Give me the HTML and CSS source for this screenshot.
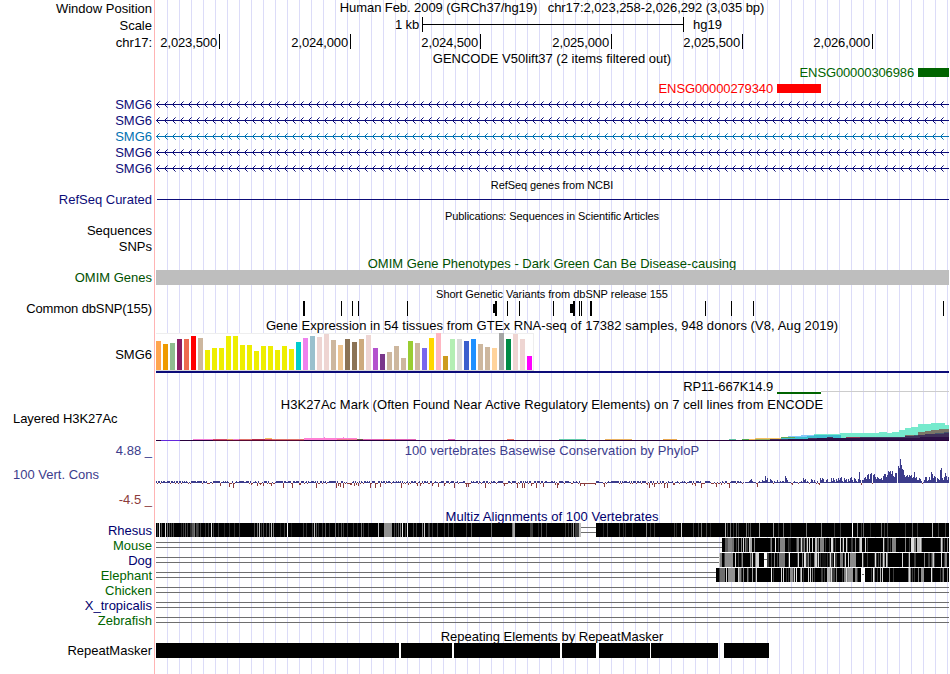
FILE: index.html
```html
<!DOCTYPE html>
<html lang="en">
<head>
  <meta charset="UTF-8">
  <title>chr17:2,023,258-2,026,292 - Genome Browser</title>
  <link rel="stylesheet" href="styles.css">
</head>
<body>
  <main class="browser">
    <!-- Position and ruler -->
    <div class="row ruler">
      <div class="label">Window Position</div>
      <div class="title position">Human Feb. 2009 (GRCh37/hg19) &nbsp; chr17:2,023,258-2,026,292 (3,035 bp)</div>
    </div>
    <div class="row ruler">
      <div class="label">Scale</div>
      <svg class="plot" viewBox="154 0 795 17">
        <path d="M422 0h1v15h-1zM683 0h1v15h-1zM422 7h262v1h-262z"/>
        <text class="end" x="419" y="12">1 kb</text>
        <text x="693" y="12">hg19</text>
      </svg>
    </div>
    <div class="row ruler">
      <div class="label">chr17:</div>
      <svg class="plot" id="ruler" viewBox="154 0 795 17"></svg>
    </div>

    <!-- GENCODE -->
    <div class="title gencode-title">GENCODE V50lift37 (2 items filtered out)</div>
    <div class="row gene">
      <div class="label"></div>
      <svg class="plot green" viewBox="154 0 795 16">
        <text class="end" x="914" y="13">ENSG00000306986</text>
        <rect x="918" y="4" width="31" height="9"/>
      </svg>
    </div>
    <div class="row gene">
      <div class="label"></div>
      <svg class="plot red" viewBox="154 0 795 16">
        <text class="end" x="773" y="13">ENSG00000279340</text>
        <rect x="777" y="4" width="44" height="9"/>
      </svg>
    </div>
    <div class="row gene navy"><div class="label">SMG6</div><svg class="plot intron" viewBox="154 0 795 16"></svg></div>
    <div class="row gene navy"><div class="label">SMG6</div><svg class="plot intron" viewBox="154 0 795 16"></svg></div>
    <div class="row gene azure"><div class="label">SMG6</div><svg class="plot intron" viewBox="154 0 795 16"></svg></div>
    <div class="row gene navy"><div class="label">SMG6</div><svg class="plot intron" viewBox="154 0 795 16"></svg></div>
    <div class="row gene navy"><div class="label">SMG6</div><svg class="plot intron" viewBox="154 0 795 16"></svg></div>

    <!-- RefSeq -->
    <div class="title small refseq-title">RefSeq genes from NCBI</div>
    <div class="row refseq navy">
      <div class="label">RefSeq Curated</div>
      <svg class="plot" viewBox="154 0 795 16"><rect x="157" y="7" width="792" height="1"/></svg>
    </div>

    <!-- Publications -->
    <div class="title small pubs-title">Publications: Sequences in Scientific Articles</div>
    <div class="row gene"><div class="label">Sequences</div></div>
    <div class="row gene"><div class="label">SNPs</div></div>

    <!-- OMIM -->
    <div class="title omim-title">OMIM Gene Phenotypes - Dark Green Can Be Disease-causing</div>
    <div class="row omim">
      <div class="label">OMIM Genes</div>
      <svg class="plot" viewBox="154 0 795 15"><rect x="156" width="793" height="15" fill="#bebebe"/></svg>
    </div>

    <!-- dbSNP -->
    <div class="title small snp-title">Short Genetic Variants from dbSNP release 155</div>
    <div class="row snp">
      <div class="label">Common dbSNP(155)</div>
      <svg class="plot" id="snps" viewBox="154 0 795 15"></svg>
    </div>

    <!-- GTEx -->
    <div class="title wide gtex-title">Gene Expression in 54 tissues from GTEx RNA-seq of 17382 samples, 948 donors (V8, Aug 2019)</div>
    <div class="row gtex">
      <div class="label">SMG6</div>
      <svg class="plot" id="gtex" viewBox="154 0 795 46"></svg>
    </div>
    <div class="row gene">
      <div class="label"></div>
      <svg class="plot" viewBox="154 0 795 16">
        <text class="end" x="773" y="12">RP11-667K14.9</text>
        <rect x="777" y="13" width="44" height="2" fill="#006400"/>
        <rect x="821" y="12" width="128" height="1" fill="#ccc"/>
      </svg>
    </div>

    <!-- H3K27Ac -->
    <div class="title wide h3k-title">H3K27Ac Mark (Often Found Near Active Regulatory Elements) on 7 cell lines from ENCODE</div>
    <div class="row h3k">
      <div class="label left">Layered H3K27Ac</div>
      <svg class="plot" id="h3k" viewBox="154 412 795 30"></svg>
    </div>

    <!-- Conservation -->
    <div class="row cons-head">
      <div class="label indigo">4.88 _</div>
      <div class="title wide indigo">100 vertebrates Basewise Conservation by PhyloP</div>
    </div>
    <div class="row cons">
      <div class="label-stack">
        <div class="indigo">100 Vert. Cons</div>
        <div class="min">-4.5 _</div>
      </div>
      <svg class="plot" id="phylop" viewBox="154 459 795 50"></svg>
    </div>

    <!-- Multiz -->
    <div class="title wide multiz-title">Multiz Alignments of 100 Vertebrates</div>
    <div class="row species primary"><div class="label">Rhesus</div><svg class="plot" id="rhesus" viewBox="154 0 795 15"></svg></div>
    <div class="row species"><div class="label">Mouse</div><svg class="plot" id="mouse" viewBox="154 0 795 15"></svg></div>
    <div class="row species primary"><div class="label">Dog</div><svg class="plot" id="dog" viewBox="154 0 795 15"></svg></div>
    <div class="row species"><div class="label">Elephant</div><svg class="plot" id="elephant" viewBox="154 0 795 15"></svg></div>
    <div class="row species"><div class="label">Chicken</div><svg class="plot" id="chicken" viewBox="154 0 795 15"></svg></div>
    <div class="row species primary"><div class="label">X_tropicalis</div><svg class="plot" id="frog" viewBox="154 0 795 15"></svg></div>
    <div class="row species"><div class="label">Zebrafish</div><svg class="plot" id="zebrafish" viewBox="154 0 795 15"></svg></div>

    <!-- RepeatMasker -->
    <div class="title repeat-title">Repeating Elements by RepeatMasker</div>
    <div class="row repeat">
      <div class="label">RepeatMasker</div>
      <svg class="plot" id="repeats" viewBox="154 0 795 15"></svg>
    </div>
  </main>
  <script src="script.js"></script>
</body>
</html>
```

FILE: styles.css
```css
body {
  margin: 0;
  background: #fff;
  color: #000;
  font-family: "Liberation Sans", Arial, sans-serif;
  font-size: 13px;
}
/* Guide lines every 12px, red line between labels and tracks */
.browser {
  width: 949px;
  height: 674px;
  overflow: hidden;
  background-image:
    linear-gradient(to right, #fff 154px, #ffb4b4 154px, #ffb4b4 155px, #fff 155px),
    linear-gradient(to right, #dcdcf8 1px, transparent 1px);
  background-size: 156px 100%, 12px 100%;
  background-position: 0 0, 167px 0;
  background-repeat: no-repeat, repeat;
}
/* The row track is fixed so that a tall line never stretches the plot */
.row {
  display: grid;
  grid-template-columns: 154px 795px;
  grid-template-rows: 100%;
}
.label {
  text-align: right;
  padding-right: 2px;
  white-space: pre;
}
.label.left {
  text-align: left;
  padding-left: 13px;
  letter-spacing: -0.07px;
}
.title {
  margin-left: 154px;
  padding-left: 1px;
  text-align: center;
  white-space: nowrap;
}
.row .title {
  margin-left: 0;
}
.title.small {
  font-size: 11px;
  letter-spacing: -0.08px;
}
.title.wide {
  letter-spacing: 0.055px;
}
.plot {
  display: block;
  width: 795px;
  height: 100%;
  fill: currentColor;
  shape-rendering: crispEdges;
}
.end {
  text-anchor: end;
  letter-spacing: -0.13px;
}

/* Colors */
.navy { color: #0c0c78; }
.azure { color: #0072b2; }
.green { color: #006400; }
.red { color: #f00; }
.indigo { color: #3c3c8c; }

/* Track heights */
.ruler {
  height: 17px;
  line-height: 17px;
}
.title.position {
  line-height: 15px;
  letter-spacing: -0.07px;
}
.gencode-title {
  height: 13px;
  line-height: 15px;
}
.gene {
  height: 16px;
  line-height: 16px;
}
.gene .label {
  line-height: 17px;
}
.refseq-title {
  height: 16px;
  line-height: 18px;
}
.refseq {
  height: 16px;
  line-height: 15px;
}
.pubs-title {
  height: 14px;
  line-height: 16px;
}
.omim-title {
  height: 16px;
  line-height: 19px;
  color: #005000;
}
.omim {
  height: 15px;
  line-height: 15px;
}
.omim .label {
  color: #005000;
}
.title.snp-title {
  height: 16px;
  line-height: 19px;
  letter-spacing: -0.03px;
}
.snp {
  height: 15px;
  line-height: 15px;
}
.snp .label {
  letter-spacing: -0.12px;
}
.gtex-title {
  height: 17px;
  line-height: 20px;
}
.gtex {
  height: 46px;
  line-height: 43px;
}
.h3k-title {
  height: 17px;
  line-height: 20px;
}
.h3k {
  height: 30px;
  line-height: 13px;
}
.cons-head {
  height: 17px;
  line-height: 17px;
}
.cons {
  height: 50px;
}
.label-stack {
  line-height: 16px;
  padding: 8px 2px 0 13px;
}
.min {
  margin-top: 9px;
  text-align: right;
  color: #8c3c3c;
}
.multiz-title {
  height: 14px;
  line-height: 16px;
  color: #00006e;
}
.species {
  height: 15px;
  line-height: 15px;
}
.species .label {
  color: #006400;
}
.primary .label {
  color: #00006e;
}
.repeat-title {
  height: 15px;
  line-height: 18px;
}
.repeat {
  height: 15px;
  line-height: 15px;
}
```

FILE: script.js
```js
const SVG_NS = 'http://www.w3.org/2000/svg';

function el(parent, tag, attrs) {
  const node = document.createElementNS(SVG_NS, tag);
  for (const key in attrs) node.setAttribute(key, attrs[key]);
  parent.appendChild(node);
  return node;
}

function rect(parent, x, y, width, height, fill) {
  return el(parent, 'rect', fill ? { x, y, width, height, fill } : { x, y, width, height });
}

// Small repeatable random generator
function random(seed) {
  return () => {
    seed = (seed * 1664525 + 1013904223) % 4294967296;
    return seed / 4294967296;
  };
}

// Ruler
const ruler = document.getElementById('ruler');
[[219, '2,023,500'], [350, '2,024,000'], [480, '2,024,500'],
 [611, '2,025,000'], [742, '2,025,500'], [872, '2,026,000']].forEach(([x, name]) => {
  rect(ruler, x, 0, 1, 15);
  el(ruler, 'text', { x: x - 2, y: 13, class: 'end' }).textContent = name;
});

// Introns with strand arrows, the tips of the arrows fade out
document.querySelectorAll('.intron').forEach(svg => {
  let d = 'M156 8h793v1h-793z';
  let tips = '';
  for (let x = 156; x < 949; x += 8) {
    for (let i = 1; i < 3; i++) {
      d += `M${x + i} ${8 - i}h1v1h-1zM${x + i} ${8 + i}h1v1h-1z`;
    }
    tips += `M${x + 3} 5h1v1h-1zM${x + 3} 11h1v1h-1z`;
  }
  el(svg, 'path', { d });
  el(svg, 'path', { d: tips, opacity: 0.6 });
});

// SNPs: x, width
const snps = document.getElementById('snps');
[[303, 2], [341, 1], [352, 1], [358, 1], [407, 1], [495, 2], [507, 1], [519, 1],
 [553, 1], [573, 2], [579, 1], [581, 1], [590, 2], [705, 1], [731, 1], [753, 1],
 [943, 1]].forEach(([x, w]) => rect(snps, x, 0, w, 15));
rect(snps, 493, 3, 2, 9);
rect(snps, 570, 3, 4, 9);

// Tissue expression: height, color
const tissues = [
  [29, '#ffa54f'], [26, '#ee9a00'], [27, '#8fbc8f'], [31, '#8b1c62'], [31, '#ee6a50'],
  [34, '#ff0000'], [32, '#cdb79e'], [20, '#eeee00'], [22, '#eeee00'], [22, '#eeee00'],
  [34, '#eeee00'], [34, '#eeee00'], [25, '#eeee00'], [25, '#eeee00'], [19, '#eeee00'],
  [24, '#eeee00'], [24, '#eeee00'], [20, '#eeee00'], [24, '#eeee00'], [21, '#eeee00'],
  [28, '#00cdcd'], [32, '#ee82ee'], [34, '#9ac0cd'], [33, '#eed5d2'], [36, '#eed5d2'],
  [30, '#cdb79e'], [25, '#eec591'], [31, '#8b7355'], [28, '#8b7355'], [31, '#cdaa7d'],
  [35, '#eed5d2'], [22, '#b452cd'], [16, '#7a378b'], [18, '#cdb79e'], [24, '#cdb79e'],
  [12, '#cdb79e'], [29, '#9acd32'], [27, '#cdb79e'], [22, '#7a67ee'], [32, '#ffd700'],
  [37, '#ffb6c1'], [14, '#cd9b1d'], [31, '#b4eeb4'], [31, '#d9d9d9'], [29, '#3a5fcd'],
  [31, '#1e90ff'], [26, '#cdb79e'], [23, '#cdb79e'], [22, '#ffd39b'], [37, '#a6a6a6'],
  [31, '#008b45'], [36, '#eed5d2'], [31, '#eed5d2'], [14, '#ff00ff']
];
const gtex = document.getElementById('gtex');
rect(gtex, 156, 0, 378, 38, '#eee');
rect(gtex, 156, 1, 377, 36, '#fff');
rect(gtex, 156, 37, 378, 1, '#d8d8d8');
tissues.forEach(([h, color], i) => rect(gtex, 156 + i * 7, 37 - h, 5, h, color));
rect(gtex, 156, 38, 793, 2, '#0c0c78');

// H3K27Ac layers. Each step is x, top; a layer is filled down to the baseline.
const h3k = document.getElementById('h3k');
const BASE = 441;
function layer(steps, end, fill) {
  let d = `M${steps[0][0]} ${BASE}`;
  steps.forEach(([x, y]) => { d += `H${x}V${y}`; });
  el(h3k, 'path', { d: d + `H${end}V${BASE}Z`, fill });
}
layer([[840, 433], [879, 432], [887, 433], [892, 432], [899, 430], [905, 428], [911, 427],
       [918, 424], [931, 423], [945, 425]], 949, '#76eacd');
layer([[788, 436], [801, 435]], 840, '#82c8fa');
layer([[814, 434], [840, 434]], 841, '#76eacd');
layer([[788, 437], [807, 436], [814, 435]], 841, '#3cbecd');
layer([[905, 435], [918, 432], [925, 431], [931, 430], [939, 429]], 949, '#7a7568');
layer([[905, 437], [914, 435], [925, 434], [935, 433], [944, 432]], 949, '#46586e');
layer([[770, 439], [808, 438], [827, 437], [833, 438], [840, 438], [846, 437], [905, 436],
       [918, 435], [925, 434], [944, 433]], 949, '#40305a');
layer([[788, 439], [817, 438], [860, 438], [920, 437]], 949, '#2d1046');
[[193, 439, 20, '#f07bd0'], [213, 439, 14, '#d8486a'], [227, 439, 6, '#e69a60'],
 [233, 439, 6, '#f07bd0'], [239, 439, 13, '#e0706a'], [252, 439, 13, '#b8284a'],
 [265, 438, 7, '#f5c060'], [265, 439, 7, '#d8486a'], [272, 439, 32, '#e0706a'],
 [304, 438, 53, '#ff7fd4'], [304, 439, 53, '#ff7fd4'], [337, 439, 20, '#f07890'],
 [324, 437, 1, '#ff7fd4'], [343, 437, 1, '#ff7fd4'], [357, 439, 6, '#6b5540'],
 [363, 439, 20, '#e060b4'], [383, 439, 7, '#f07060'], [390, 439, 26, '#e060b4'],
 [448, 439, 7, '#e060b4'], [507, 439, 7, '#f07868'], [559, 439, 27, '#60c8a8'],
 [605, 439, 27, '#e8b060'], [663, 439, 14, '#e8a850'], [729, 439, 7, '#60c0a0'],
 [742, 439, 7, '#50a850'], [749, 439, 7, '#f0b860'], [755, 438, 26, '#f5c060'],
 [755, 439, 15, '#90a860'], [781, 437, 7, '#60a850'], [781, 438, 7, '#3cbecd'],
 [788, 437, 7, '#60a850'], [846, 437, 14, '#8a3050']
].forEach(([x, y, w, fill]) => rect(h3k, x, y, w, 1, fill));
rect(h3k, 156, 440, 793, 1, '#28003c');
rect(h3k, 161, 440, 19, 1, '#6428dc');
rect(h3k, 213, 440, 91, 1, '#5a0a32');

// PhyloP: scores from 740 on, noise around zero before that
const phylop = document.getElementById('phylop');
const scores = [
  2, 1, -1, 1, 0, 1, 1, 1, 1, 2, 3, 4, 2, 1, 1, 1, -1, -4, 1, 2,
  1, 1, 3, 2, 2, 7, 3, 5, 1, 1, 4, 3, 2, -1, 2, 1, 1, 3, 1, 1,
  2, 1, 2, 2, 1, 7, 5, 3, 1, 1, 1, -1, -2, 1, 2, 1, 1, 1, -1, 1,
  1, 2, 1, 5, 3, 4, 1, 2, 1, -1, 1, 4, 3, 1, 3, 1, -1, 2, -1, -2,
  5, 3, 5, 4, 1, 1, 3, 4, 1, 1, 1, 5, 2, 5, 3, 1, 4, 2, 5, 3,
  5, 6, 2, 1, 5, 3, 4, 1, 4, 2, 5, 6, 3, 1, 5, 4, 2, 1, 4, 11,
  3, -2, 3, 3, 5, 6, 4, 8, 9, 4, 9, 10, -1, 8, 9, 6, 4, 6, 5, 4,
  4, 5, 3, 7, 9, 9, 6, 8, 12, 11, 12, 9, 12, 7, 6, 10, 10, 0, 17, 15,
  24, 18, 14, 13, 8, 6, 7, 8, 6, 8, 7, 8, 5, 6, 11, 5, 6, 3, 3, 5,
  4, 2, -1, 1, 3, 6, 6, 2, 3, 6, 3, 11, 9, 5, 7, 6, 1, 5, 4, 3,
  13, 15, 5, 3, 6, 10, 7, 3, 6
];
const noise = random(17);
for (let x = 156; x < 740; x++) {
  const r = noise();
  if (r < 0.5) rect(phylop, x, 481, 1, 2, '#3c3c8c');
  else if (r < 0.7) rect(phylop, x, 482, 1, 1, '#3c3c8c');
  else if (r < 0.89) rect(phylop, x, 483, 1, 1, '#8c3c3c');
  else rect(phylop, x, 483, 1, 1 + Math.ceil(noise() * 4), '#8c3c3c');
}
rect(phylop, 581, 481, 15, 2, '#fff');
rect(phylop, 581, 483, 15, 1, '#8c3c3c');
scores.forEach((s, i) => {
  if (s >= 0) rect(phylop, 740 + i, 483 - s, 1, s, '#3c3c8c');
  else rect(phylop, 740 + i, 483, 1, -s, '#8c3c3c');
});

// Alignments
function gapLines(svg, from, to) {
  rect(svg, from, 4, to - from, 1, '#6e6e6e');
  rect(svg, from, 9, to - from, 1, '#6e6e6e');
}
function grey(level) {
  return `rgb(${level},${level},${level})`;
}
function stripes(svg, list) {
  list.forEach(([x, w, level]) => rect(svg, x, 0, w, 14, grey(level)));
}

const rhesus = document.getElementById('rhesus');
rect(rhesus, 156, 0, 424, 14, '#000');
gapLines(rhesus, 581, 596);
rect(rhesus, 596, 0, 353, 14, '#000');
stripes(rhesus, [
  [157, 1, 60], [159, 1, 230], [161, 1, 80], [165, 1, 220], [167, 1, 110], [169, 1, 70],
  [171, 1, 60], [173, 1, 70], [181, 1, 40], [183, 1, 60], [185, 1, 80], [187, 1, 60],
  [190, 2, 50], [192, 2, 90], [194, 1, 120], [196, 2, 70], [198, 1, 50], [200, 1, 60],
  [205, 1, 50], [208, 1, 60], [211, 1, 220], [213, 1, 70], [218, 1, 60], [224, 1, 40],
  [229, 1, 50], [234, 1, 50], [239, 1, 60], [254, 1, 70], [257, 1, 110], [259, 1, 190],
  [261, 1, 60], [263, 1, 70], [266, 1, 60], [269, 1, 100], [271, 1, 190], [273, 1, 120],
  [280, 1, 30], [284, 1, 60], [287, 1, 245], [291, 1, 30], [303, 1, 60], [306, 1, 50],
  [312, 1, 70], [314, 1, 190], [316, 1, 90], [318, 1, 50], [322, 1, 50], [325, 1, 90],
  [329, 1, 50], [335, 1, 110], [338, 1, 50], [341, 1, 80], [343, 1, 60], [347, 1, 50],
  [353, 1, 50], [357, 1, 40], [361, 1, 110], [363, 1, 60], [368, 1, 50], [378, 1, 190],
  [384, 8, 145], [394, 1, 70], [396, 1, 60], [398, 1, 90], [400, 1, 120], [402, 1, 235],
  [405, 1, 70], [407, 1, 235], [413, 1, 60], [416, 1, 60], [422, 1, 130], [424, 1, 200],
  [428, 2, 60], [432, 1, 50], [437, 1, 70], [444, 1, 50], [448, 1, 70], [453, 1, 60],
  [466, 1, 60], [471, 1, 90], [491, 1, 100], [512, 1, 120], [513, 2, 165], [530, 3, 60],
  [538, 1, 40], [541, 1, 80], [546, 1, 60], [565, 1, 60], [568, 1, 50], [571, 1, 60],
  [573, 1, 160], [575, 4, 60], [579, 2, 190],
  [603, 1, 40], [607, 1, 70], [619, 1, 70], [623, 1, 40], [625, 1, 50], [632, 1, 40],
  [646, 1, 130], [650, 1, 50], [654, 1, 60], [674, 1, 60], [676, 1, 40], [681, 1, 210],
  [693, 1, 60], [698, 1, 60], [701, 1, 110], [706, 1, 70], [710, 1, 40], [725, 1, 180],
  [727, 1, 60], [730, 1, 110], [733, 1, 50], [736, 1, 90], [738, 1, 60], [746, 1, 120],
  [748, 1, 60], [750, 1, 80], [759, 1, 160], [773, 1, 150], [778, 1, 50], [783, 1, 110],
  [790, 1, 40], [806, 1, 120], [821, 1, 120], [834, 1, 60], [840, 1, 60], [852, 1, 250],
  [857, 1, 130], [861, 1, 60], [863, 1, 100], [870, 1, 40], [881, 1, 110], [884, 1, 60],
  [887, 1, 70], [905, 1, 60], [912, 1, 90], [917, 1, 60], [932, 1, 180], [938, 1, 60],
  [945, 1, 70]
]);

// Mixed columns: random conservation, with the long runs painted on top
function alignment(id, start, seed, runs) {
  const svg = document.getElementById(id);
  const rnd = random(seed);
  gapLines(svg, 156, start);
  rect(svg, start, 0, 949 - start, 14, '#000');
  for (let x = start + 1; x < 949; x++) {
    const r = rnd();
    const level = r < 0.55 ? 0 : r < 0.75 ? 60 : r < 0.9 ? 130 : 215;
    if (level) stripes(svg, [[x, 1, level]]);
  }
  stripes(svg, runs);
  return svg;
}
alignment('mouse', 722, 5, [
  [722, 3, 0], [725, 3, 90], [728, 4, 130], [732, 2, 110], [750, 2, 170], [755, 15, 0],
  [770, 1, 70], [775, 1, 230], [780, 5, 130], [789, 2, 30], [802, 2, 60], [815, 2, 190],
  [820, 4, 130], [831, 2, 220], [843, 1, 220], [851, 2, 60], [860, 2, 210], [870, 3, 0],
  [879, 4, 0], [893, 3, 130], [897, 8, 0], [906, 2, 0], [911, 3, 220], [914, 2, 130],
  [917, 3, 190], [922, 10, 0], [933, 4, 0]
]);
const dog = alignment('dog', 719, 11, [
  [719, 1, 200], [720, 2, 130], [725, 8, 140], [735, 1, 210], [744, 6, 0], [756, 3, 210],
  [760, 4, 0], [764, 3, 255], [779, 6, 120], [789, 1, 250], [792, 3, 0], [800, 2, 0],
  [804, 1, 230], [815, 1, 210], [822, 4, 20], [834, 1, 240], [840, 3, 120], [850, 6, 140],
  [862, 1, 210], [868, 4, 0], [875, 1, 230], [888, 12, 0], [903, 4, 0], [909, 1, 200],
  [918, 6, 0], [933, 1, 200], [936, 4, 0]
]);
rect(dog, 764, 6, 3, 1, '#6e6e6e');
const elephant = alignment('elephant', 716, 23, [
  [716, 2, 0], [720, 5, 110], [728, 7, 145], [738, 1, 210], [752, 1, 160], [759, 11, 0],
  [771, 1, 240], [778, 3, 0], [790, 3, 140], [796, 1, 230], [804, 3, 0], [816, 3, 0],
  [827, 3, 180], [838, 3, 0], [848, 5, 150], [861, 4, 255], [866, 5, 0], [873, 1, 240],
  [880, 1, 180], [884, 5, 0], [894, 14, 0], [909, 1, 220], [921, 3, 140], [925, 5, 0],
  [931, 1, 230], [936, 3, 0]
]);
rect(elephant, 862, 6, 2, 1, '#6e6e6e');
['chicken', 'frog', 'zebrafish'].forEach(id => gapLines(document.getElementById(id), 156, 949));

// Repeats: start, end
const repeats = document.getElementById('repeats');
[[156, 399], [401, 452], [454, 560], [562, 596], [599, 650], [651, 718], [724, 769]]
  .forEach(([a, b]) => rect(repeats, a, 0, b - a, 15));
[[399, 401], [452, 454], [560, 562], [596, 599], [650, 651]]
  .forEach(([a, b]) => rect(repeats, a, 0, b - a, 15, '#fff'));
```
